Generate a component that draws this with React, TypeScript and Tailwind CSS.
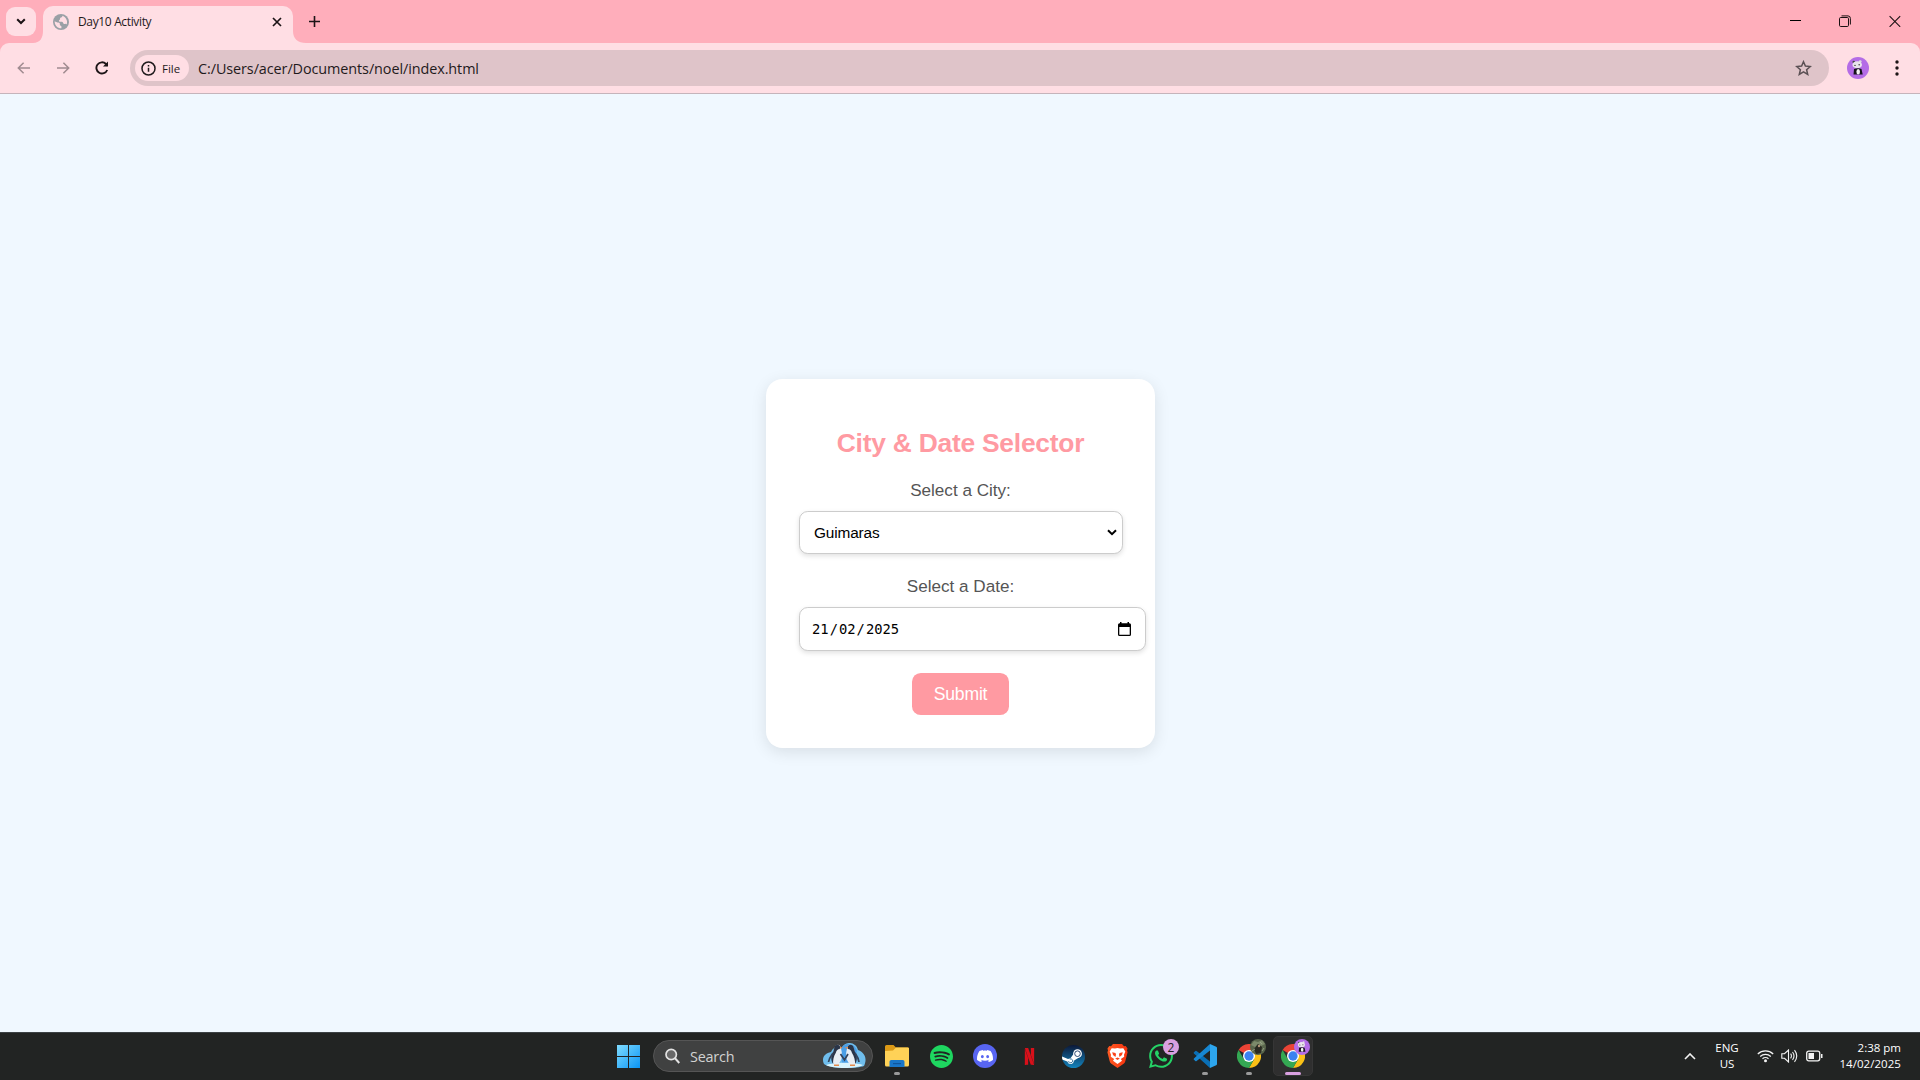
import React from "react";
import { SiSpotify, SiDiscord, SiNetflix, SiWhatsapp } from "react-icons/si";

const ui = "font-['Open_Sans','Noto_Sans',sans-serif]";

function Panda({ size }: { size: number }) {
  return (
    <svg width={size} height={size} viewBox="0 0 22 22">
      <circle cx="11" cy="11" r="11" fill="#b46ce6" />
      <circle cx="6.800" cy="5" r="1.300" fill="#444" />
      <circle cx="13.200" cy="4.600" r="1.400" fill="#ddd" />
      <ellipse cx="10.200" cy="7.800" rx="4.800" ry="3.600" fill="#e9e4ec" />
      <ellipse cx="8" cy="8.400" rx=".9" ry="0.700" fill="#555" />
      <ellipse cx="12.200" cy="7.800" rx=".9" ry="0.700" fill="#555" />
      <path d="M7 12q4-1.500 7.500 0l1.200 5.500H6.500z" fill="#15121a" />
      <ellipse cx="11.200" cy="14.800" rx="1.800" ry="2.800" fill="#f4f4f4" />
    </svg>
  );
}

function Globe() {
  return (
    <svg width="16" height="16" viewBox="0 0 16 16">
      <circle cx="8" cy="8" r="8" fill="#9aa0a6" />
      <path d="M9.300 1.700c.2 1-.4 1.700-1.300 1.800-.9.100-1 .8-.900 1.500.1.700-1.100.8-1.200 1.700 0 .9.800 1.100 1.800 1 1.300-.1 2.300.2 2.500 1.300.1.900 1 1 1.900.9.800-.1 1.300.1 1.600.5.500-1.800.6-3.300-.4-5.100C12.500 3.500 11 2.200 9.300 1.700zM1.700 7.200c1.100.6 2.200 1.300 3.600 1.300 1.200 0 1.700.8 1.500 1.800-.1.900.6 1.300 1.300 1.700.5.300.4 1.400.3 2.300-3.800.1-6.900-3.100-6.700-7.100z" fill="#ffdee4" />
    </svg>
  );
}

function TabStrip() {
  return (
    <div className="flex h-[43px] bg-[#ffaebb]">
      <button className="ml-[6px] mt-[7px] flex h-[29px] w-[30px] items-center justify-center rounded-[9px] bg-[#ffdee4]">
        <svg width="10" height="7" viewBox="0 0 10 7" fill="none" stroke="#1c1416" strokeWidth="2">
          <path d="M1.200 1.200L5 5l3.800-3.800" />
        </svg>
      </button>
      <svg className="ml-[-3px] mt-[31px]" width="12" height="12" viewBox="0 0 12 12">
        <path d="M12 0v12H0C7 12 10 7 10 0z" fill="#ffdee4" />
      </svg>
      <div className="-ml-[2px] mt-[6px] flex h-[37px] w-[250px] items-center rounded-t-[10px] bg-[#ffdee4] pb-[5px] pl-[10px] pr-[11px]">
        <Globe />
        <span className={`${ui} ml-[9px] text-[12px] leading-none tracking-[-0.35px] text-[#1f1a1c]`}>Day10 Activity</span>
        <svg className="ml-auto" width="10" height="10" viewBox="0 0 10 10" stroke="#1c1416" strokeWidth="1.700">
          <path d="M1 1l8 8M9 1L1 9" />
        </svg>
      </div>
      <svg className="-ml-[1px] mt-[31px]" width="14" height="12" viewBox="0 0 14 12">
        <path d="M0 0v12h14C6 12 1 8 1 0z" fill="#ffdee4" />
      </svg>
      <svg className="ml-[3px] mt-[16px]" width="11" height="11" viewBox="0 0 11 11" stroke="#1c1416" strokeWidth="1.600">
        <path d="M5.500 0v11M0 5.500h11" />
      </svg>
      <div className="ml-auto mr-[19px] mt-[15px] flex gap-[38px]">
        <svg className="ml-px" width="11" height="12" viewBox="0 0 11 12" stroke="#000" fill="none">
          <path d="M0 5.500h11" />
        </svg>
        <svg width="12" height="12" viewBox="0 0 12 12" stroke="#1a1012" fill="none">
          <rect x=".5" y="2.500" width="9" height="9" rx="1.200" />
          <path d="M2.500 .9H9a2.500 2.500 0 0 1 2.400 2.500V9.500" />
        </svg>
        <svg width="12" height="12" viewBox="0 0 12 12" stroke="#1a1012" strokeWidth="1.100" fill="none">
          <path d="M.6 1.200l10.600 10.600M11.200 1.200L.6 11.800" />
        </svg>
      </div>
    </div>
  );
}

function Toolbar() {
  return (
    <div className="bg-[#ffaebb]">
      <div className="flex h-[51px] items-center rounded-t-[9px] border-b border-[#c5b4bb] bg-[#ffdee4]">
        <svg className="ml-[17px]" width="14" height="12" viewBox="0 0 14 12" fill="none" stroke="#a08b90" strokeWidth="1.500">
          <path d="M13 6H1.500M6.600 .7L1.300 6l5.300 5.300" />
        </svg>
        <svg className="ml-[25px]" width="14" height="12" viewBox="0 0 14 12" fill="none" stroke="#a08b90" strokeWidth="1.500">
          <path d="M1 6h11.500M7.400 .7L12.700 6l-5.300 5.300" />
        </svg>
        <svg className="ml-[25px]" width="14" height="14" viewBox="0 0 14 14" fill="none" stroke="#1c1416" strokeWidth="1.900">
          <path d="M12.200 9A5.600 5.600 0 1 1 11 3l1.500 1.600" />
          <path d="M13 .5v5H8z" fill="#1c1416" stroke="none" />
        </svg>
        <div className="ml-[21px] flex h-[36px] w-[1699px] items-center rounded-full bg-[#dfc4c9] pl-[5px]">
          <div className="flex h-[26px] w-[54px] items-center rounded-full bg-[#ffdee4] pl-[6px]">
            <svg width="15" height="15" viewBox="0 0 15 15" fill="none" stroke="#1f1a1c" strokeWidth="1.500">
              <circle cx="7.500" cy="7.500" r="6.500" />
              <path d="M7.500 6.700v4.100M7.500 4v1.500" />
            </svg>
            <span className={`${ui} ml-[6px] pt-[2px] text-[11.500px] font-medium leading-none text-[#1f1a1c]`}>File</span>
          </div>
          <span className={`${ui} ml-[9px] pt-[2px] text-[14.400px] leading-none tracking-[-0.080px] text-[#1f1a1c]`}>C:/Users/acer/Documents/noel/index.html</span>
          <svg className="ml-auto mr-[17px]" width="17" height="16" viewBox="0 0 17 16" fill="none" stroke="#5b5054" strokeWidth="1.500">
            <path d="M8.500 1.700l1.900 4.400 4.800.4-3.600 3.200 1.100 4.700-4.200-2.500-4.200 2.500 1.100-4.700L1.800 6.500l4.800-.4z" />
          </svg>
        </div>
        <div className="ml-[18px]"><Panda size={22} /></div>
        <svg className="ml-[26px]" width="4" height="16" viewBox="0 0 4 16" fill="#1c1416">
          <circle cx="2" cy="2" r="1.700" /><circle cx="2" cy="8" r="1.700" /><circle cx="2" cy="14" r="1.700" />
        </svg>
      </div>
    </div>
  );
}

function SelectorCard() {
  return (
    <div className="flex h-[369px] w-[389px] flex-col items-center rounded-[16.500px] bg-white px-[33px] shadow-[0_4px_16px_rgba(0,0,0,0.1)]">
      <h2 className="mt-[49px] text-[26.400px] font-bold leading-[30px] tracking-[-0.24px] whitespace-nowrap text-[#ff9aa2]">City &amp; Date Selector</h2>
      <div className="mt-[23px] text-[17.100px] leading-5 text-[#555]">Select a City:</div>
      <div className="mt-[10px] flex h-[43px] w-[324px] shrink-0 items-center justify-between self-start rounded-[8.800px] border border-[#ccc] bg-white pl-[14px] pr-[5px] text-[15.400px] text-black shadow-[0_2px_5px_rgba(0,0,0,0.12)]">
        <span className="pt-[2px] tracking-[-0.15px]">Guimaras</span>
        <svg width="10" height="7" viewBox="0 0 10 7" fill="none" stroke="#000" strokeWidth="2">
          <path d="M1 1.200l4 4 4-4" />
        </svg>
      </div>
      <div className="mt-[23px] text-[17.100px] leading-5 text-[#555]">Select a Date:</div>
      <div className="mt-[10px] flex h-[44px] w-[347px] shrink-0 items-center justify-between self-start rounded-[8.800px] border border-[#ccc] bg-white pl-[12px] pr-[14px] font-['DejaVu_Sans_Mono',monospace] text-[13.800px] text-black shadow-[0_2px_5px_rgba(0,0,0,0.12)]">
        <span className="flex gap-[1px] pt-[2px]"><span>21</span><span>/</span><span>02</span><span>/</span><span>2025</span></span>
        <svg width="13" height="14" viewBox="0 0 13 14">
          <path d="M2 0h1.500v1.300h6V0H11v1.300h.5A1.500 1.500 0 0 1 13 2.800v9.700A1.500 1.500 0 0 1 11.500 14h-10A1.500 1.500 0 0 1 0 12.500V2.800A1.500 1.500 0 0 1 1.500 1.300H2zM1.300 5v7.700h10.400V5z" fill="#000" />
        </svg>
      </div>
      <button className="mt-[22px] h-[42px] w-[97px] shrink-0 rounded-[8.800px] bg-[#ff9aa2] pt-[2px] text-[17.600px] leading-none tracking-[-0.2px] text-white">Submit</button>
    </div>
  );
}

function Penguins() {
  return (
    <svg width="44" height="26" viewBox="0 0 44 26">
      <path d="M2 21C-1 15 3 10 9 9 11 4 16 3 20 5c2-7 14-7 16 2 8 3 9 10 6 16-8 3-34 3-40-2z" fill="#6fbdec" />
      <path d="M19 6c2-7 14-7 16 2l-4 12H20z" fill="#4b9fe6" />
      <path d="M4 22c8-3 29-3 37 0-6 4-31 4-37 0z" fill="#d9f4fc" />
      <path d="M13 4c1-3 5-3 5.500 0 1 3 2 7 1 12l-3 5.500h-5c-2-4-1.500-8 0-11 .5-2 0-4 1.500-6.500z" fill="#e8eef4" />
      <path d="M12.500 4c1-3 5-3 5.700 0l-.5 2c-2 0-3 1-4 4-2 3-3 8-2.500 11-3-4-2-9 0-12z" fill="#2a3548" />
      <path d="M31 4c-1-3-5-3-5.500 0-1 3-2 7-1 12l3 5.500h5.500c2-4 1.500-8 0-11-.5-2-.500-4-2-6.500z" fill="#e8eef4" />
      <path d="M31.500 4c-1-3-5-3-6 0l.5 2c2 0 3 1 4 4 2 3 3.500 8 3 11 3-4 2-9 0-12z" fill="#2a3548" />
      <path d="M11 10c-2 3-4 5-4.500 9M33 10c2 3 3.500 5 4 9M18.500 11l4 6 3.500-6" stroke="#34435a" strokeWidth="1.700" fill="none" />
      <path d="M18 3.800l3 1-3 1zM26 3.800l-3.500 1 3.500 1zM12 21.500h5v1.500h-5zM28 21.500h5v1.500h-5z" fill="#e58a4c" />
    </svg>
  );
}

function Chrome() {
  return (
    <svg width="24" height="24" viewBox="0 0 48 48">
      <path d="M24 24L3.200 12A24 24 0 0 1 44.800 12z" fill="#ea4335" />
      <path d="M24 12h20.800A24 24 0 0 1 24 48l10.400-18z" fill="#fbc116" />
      <path d="M3.200 12l10.400 18 20.800 0L24 48A24 24 0 0 1 3.200 12z" fill="#34a853" />
      <circle cx="24" cy="24" r="12" fill="#fff" />
      <circle cx="24" cy="24" r="9.300" fill="#3c82f0" />
    </svg>
  );
}

function Explorer() {
  return (
    <svg width="24" height="22" viewBox="0 0 24 22">
      <path d="M0 1.500A1.500 1.500 0 0 1 1.500 0h7L11 2.500h11.500A1.500 1.500 0 0 1 24 4v8H0z" fill="#dc9a16" />
      <path d="M0 6l8-.5L11 2.500h12a1 1 0 0 1 1 1V20a1.500 1.500 0 0 1-1.500 1.500h-21A1.500 1.500 0 0 1 0 20z" fill="#ffd257" />
      <path d="M4.500 22v-5.200A1.800 1.800 0 0 1 6.300 15h11.400a1.800 1.800 0 0 1 1.800 1.800V22z" fill="#1976c8" />
      <path d="M8 18h8v1.200H8z" fill="#0f559c" />
    </svg>
  );
}

function Steam() {
  return (
    <svg width="23" height="23" viewBox="0 0 23 23">
      <defs>
        <linearGradient id="steam" x1="0" y1="0" x2="0" y2="1">
          <stop stopColor="#0c1838" /><stop offset="1" stopColor="#1484bd" />
        </linearGradient>
        <clipPath id="disc"><circle cx="11.500" cy="11.500" r="11.500" /></clipPath>
      </defs>
      <circle cx="11.500" cy="11.500" r="11.500" fill="url(#steam)" />
      <g clipPath="url(#disc)">
        <path d="M0 11.500l6 2.600q1-.7 2.300-.5L11.500 9l5.500 3.500-5.200 3.300q0 3-3.100 3.200-2.600 0-3.400-2.500L0 14.500z" fill="#fff" />
        <circle cx="15.500" cy="8.700" r="4.400" fill="#fff" />
        <circle cx="15.500" cy="8.700" r="2.800" fill="none" stroke="#1b3a68" strokeWidth=".9" />
        <path d="M6 16.600l1.600.7a1.900 1.900 0 1 0 .2-3.100" fill="none" stroke="#1b5f90" strokeWidth=".8" />
      </g>
    </svg>
  );
}

function Brave() {
  return (
    <svg width="21" height="24" viewBox="0 0 21 24">
      <defs>
        <linearGradient id="brave" x1="0" y1="0" x2="1" y2="0">
          <stop stopColor="#ff5a22" /><stop offset="1" stopColor="#f4330f" />
        </linearGradient>
      </defs>
      <path d="M6 0h9l2 2.200 1.700-.2L20.500 4.500 20 6.500l.6 1.700-2.300 9q-.4 1.600-1.700 2.500L10.500 24l-6.100-4.300q-1.300-.9-1.700-2.500L.4 8.200 1 6.500l-.5-2L2.300 2l1.700.2z" fill="url(#brave)" />
      <path d="M4.700 4.200l3.300.4 2.500-.6 2.500.6 3.300-.4 2 3.300-1.300 3.200.2 2-3.400 2.300 1.200 1.700-4.500 3.300L6 16.700 7.200 15l-3.400-2.300.2-2-1.300-3.200z" fill="#fff" />
      <path d="M5.200 8.200l3.300.7.500 1.500-.5 2.500-2.500-2zM15.800 8.200l-3.300.7-.5 1.500.5 2.500 2.500-2zM8.200 14.600l2.300-1 2.300 1-2.300 1.500z" fill="#f8441a" />
    </svg>
  );
}

function VSCode() {
  return (
    <svg width="24" height="24" viewBox="0 0 24 24">
      <path d="M1 8.200l1.300-1.100q.6-.5 1.300 0L17 17.500V24L.9 9.400Q.3 8.700 1 8.200z" fill="#0a6fb5" />
      <path d="M1 15.800l1.300 1.100q.6.500 1.300 0L17 6.500V0L.9 14.600q-.6.700.1 1.200z" fill="#1787d2" />
      <path d="M17 0l6.200 2.800q.8.400.8 1.300v15.800q0 .9-.8 1.300L17 24z" fill="#2da6ee" />
    </svg>
  );
}

function TaskItem({ children, dot, active }: { children: React.ReactNode; dot?: boolean; active?: boolean }) {
  return (
    <div className={`relative mx-[2px] flex h-10 w-10 items-center justify-center rounded-[5px] ${active ? "border border-[#363636] bg-[#2f2f2f]" : ""}`}>
      {children}
      {dot && <span className="absolute bottom-[1px] h-[3px] w-[6px] rounded-full bg-[#9a9a9a]" />}
      {active && <span className="absolute bottom-0 h-[3px] w-4 rounded-full bg-[#d9a0e0]" />}
    </div>
  );
}

function Taskbar() {
  return (
    <div className={`${ui} flex h-12 items-center border-t border-[#3c4144] bg-[#222423] pb-[1px]`}>
      <svg className="ml-[617px]" width="23" height="23" viewBox="0 0 23 23">
        <defs>
          <linearGradient id="win" x1="0" y1="0" x2="23" y2="23" gradientUnits="userSpaceOnUse">
            <stop stopColor="#7fdcff" /><stop offset="1" stopColor="#0a94f5" />
          </linearGradient>
        </defs>
        <path d="M0 0h11v11H0zM12 0h11v11H12zM0 12h11v11H0zM12 12h11v11H12z" fill="url(#win)" />
      </svg>
      <div className="ml-[13px] flex h-8 w-[220px] items-center rounded-full border border-[#555] bg-[#404141] pl-[11px] pr-[6px]">
        <svg width="15" height="16" viewBox="0 0 15 16" fill="none" stroke="#e3e3e3" strokeWidth="1.700">
          <circle cx="6.200" cy="6.500" r="5.200" fill="#686868" />
          <path d="M10 10.300l4.300 4.700" strokeWidth="2" />
        </svg>
        <span className="ml-[10px] pt-[2px] text-[14.400px] leading-none tracking-[-0.2px] text-[#d2d2d2]">Search</span>
        <span className="ml-auto"><Penguins /></span>
      </div>
      <div className="ml-[2px] flex">
        <TaskItem dot><Explorer /></TaskItem>
        <TaskItem><SiSpotify size={23} color="#1ed760" /></TaskItem>
        <TaskItem>
          <span className="flex h-6 w-6 items-center justify-center rounded-full bg-[#5865f2]"><SiDiscord size={16} color="#fff" /></span>
        </TaskItem>
        <TaskItem><SiNetflix size={17} color="#d9101a" /></TaskItem>
        <TaskItem><Steam /></TaskItem>
        <TaskItem><Brave /></TaskItem>
        <TaskItem>
          <SiWhatsapp size={24} color="#25d366" />
          <span className="absolute right-[2px] top-[3px] flex h-4 w-4 items-center justify-center rounded-full bg-[#d9a0e0] pt-px text-[12px] leading-none text-[#222]">2</span>
        </TaskItem>
        <TaskItem dot><VSCode /></TaskItem>
        <TaskItem dot>
          <Chrome />
          <svg className="absolute right-[3px] top-[3px]" width="16" height="16" viewBox="0 0 16 16">
            <circle cx="8" cy="8" r="8" fill="#59664c" />
            <path d="M1 6l3-4 4 1 4-2 3 4-4 2-3-2-3 3z" fill="#7c8a6b" />
            <path d="M4 10l4-5 4 3-1 6-5 1z" fill="#292a22" />
            <circle cx="9" cy="7" r="1.200" fill="#b39678" />
            <path d="M2 12l3-2M12 12l2-3M10 3l2 2" stroke="#a1ab90" strokeWidth=".8" />
          </svg>
        </TaskItem>
        <TaskItem active>
          <Chrome />
          <span className="absolute right-[2px] top-[2px]"><Panda size={16} /></span>
        </TaskItem>
      </div>
      <svg className="ml-auto" width="12" height="7" viewBox="0 0 12 7" fill="none" stroke="#f3f3f3" strokeWidth="1.600"><path d="M1 6l5-5 5 5" /></svg>
      <div className="ml-[18px] w-[26px] text-center text-[11.500px] leading-4 text-white">ENG<br />US</div>
      <svg className="ml-[17px]" width="17" height="14" viewBox="0 0 17 14" fill="none" stroke="#f3f3f3" strokeWidth="1.200">
        <path d="M.8 5a11 11 0 0 1 15.400 0M3.200 7.500a7.600 7.600 0 0 1 10.600 0M5.500 9.800a4.300 4.300 0 0 1 6 0" />
        <circle cx="8.500" cy="11.800" r="1.500" fill="#f3f3f3" stroke="none" />
      </svg>
      <svg className="ml-[7px]" width="17" height="14" viewBox="0 0 17 14" fill="none" stroke="#f3f3f3" strokeWidth="1.100">
        <path d="M.8 4.700h2.700L7.500 1v12L3.500 9.300H.8zM9.600 4.700q1.700 2.300 0 4.600M11.500 3q3 4 0 8M13.500 1.200q4.500 5.800 0 11.600" />
      </svg>
      <svg className="ml-[8px]" width="17" height="12" viewBox="0 0 17 12">
        <rect x=".7" y="1.200" width="13" height="9.600" rx="2" fill="none" stroke="#f3f3f3" strokeWidth="1.300" />
        <path d="M2.500 3h5.500v6H2.500zM15 4h1.500v4H15z" fill="#f3f3f3" />
      </svg>
      <div className="ml-[14px] mr-[19px] w-[64px] whitespace-nowrap text-right text-[11.500px] leading-4 text-white"><div>2:38 pm</div><div className="-ml-2 tracking-[0.05px]">14/02/2025</div></div>
    </div>
  );
}

export default function App() {
  return (
    <div className="flex h-screen w-screen flex-col overflow-hidden bg-[#f0f8ff]">
      <TabStrip />
      <Toolbar />
      <main className="flex min-h-0 flex-1 items-center justify-center pl-[1px] font-['Liberation_Sans',sans-serif]">
        <SelectorCard />
      </main>
      <Taskbar />
    </div>
  );
}
